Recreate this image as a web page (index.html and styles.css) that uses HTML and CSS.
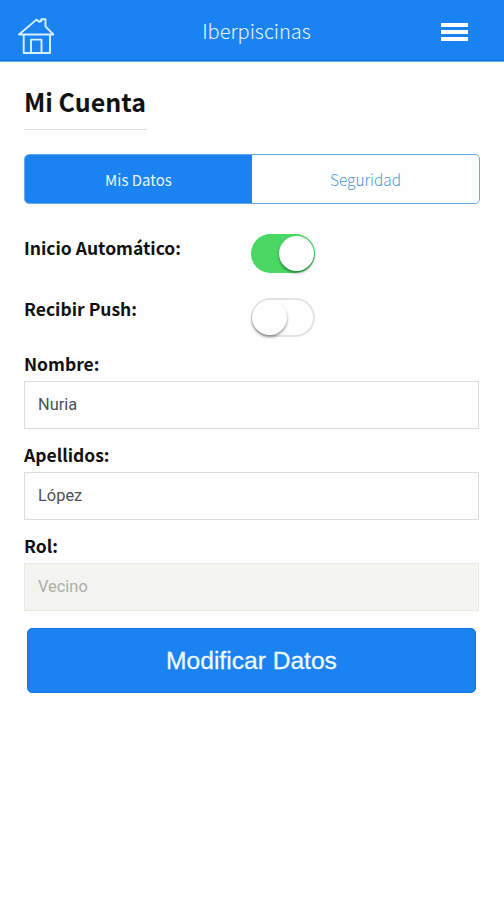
FILE: index.html
```html
<!DOCTYPE html>
<html lang="es">
<head>
<meta charset="utf-8">
<title>Mi Cuenta</title>
<link rel="stylesheet" href="styles.css">
</head>
<body>
<header class="bar">
  <svg class="home" viewBox="0 0 38 38" width="38" height="38">
    <path d="M2 17.5 19.5 2.6l2.6 2.3V4.2h2.2V2.2h4.2v7.2l7.8 8.1z"/>
    <path d="M6.7 18v18h26.3V18M14 36V22.6h10.5V36"/>
  </svg>
  <span class="brand">Iberpiscinas</span>
  <span class="menu"><i></i><i></i><i></i></span>
</header>
<main class="page">
  <h1 class="title"><span>Mi Cuenta</span></h1>
  <nav class="tabs">
    <a class="tab active"><span>Mis Datos</span></a>
    <a class="tab"><span>Seguridad</span></a>
  </nav>
  <div class="option first"><span class="label auto">Inicio Automático:</span><span class="switch on"></span></div>
  <div class="option"><span class="label push">Recibir Push:</span><span class="switch"></span></div>
  <form class="form">
    <label class="label">Nombre:</label>
    <div class="field">Nuria</div>
    <label class="label">Apellidos:</label>
    <div class="field">López</div>
    <label class="label">Rol:</label>
    <div class="field disabled">Vecino</div>
    <button type="button" class="submit">Modificar Datos</button>
  </form>
</main>
</body>
</html>
```
FILE: styles.css
```css
* { box-sizing: border-box; }
body {
  margin: 0;
  background: #fefefe;
  color: #111;
  font-family: "Noto Sans CJK SC", "Noto Sans", sans-serif;
}
.bar {
  height: 62px;
  padding: 0 36px 0 17px;
  display: grid;
  grid-template-columns: 38px 1fr 27px;
  background: #1b82f1;
  border-bottom: 1px solid #6aaef4;
  box-shadow: inset 0 -1px #0c70dc;
}
.home {
  margin-top: 17px;
  fill: none;
  stroke: #d5f1ff;
  stroke-width: 1.9;
  stroke-linejoin: round;
}
.brand {
  padding-left: 17px;
  text-align: center;
  font-size: 20px;
  font-weight: 300;
  line-height: 62px;
  color: #e8f7ff;
}
.menu {
  margin-top: 23px;
  display: flex;
  flex-direction: column;
  gap: 3px;
}
.menu i { height: 4px; background: #fff; }
.page { padding: 20px 24px 0; }
.title {
  width: 123px;
  height: 48px;
  margin: 0 0 24px;
  border-bottom: 1px solid #ddd;
  font-size: 25px;
  font-weight: 700;
  line-height: 38px;
  white-space: nowrap;
}
.tabs {
  width: 456px;
  height: 50px;
  display: flex;
  border: 1px solid #68a8e4;
  border-radius: 5px;
  overflow: hidden;
}
.tab {
  flex: 1;
  text-align: center;
  font-size: 15.4px;
  font-weight: 300;
  line-height: 49px;
  color: #4a98dc;
}
.tab.active { background: #1b82f1; color: #eaf6ff; font-size: 15px; font-weight: 400; }
.option {
  height: 39px;
  margin-top: 25px;
  display: grid;
  grid-template-columns: 227px 64px;
}
.option.first { margin-top: 30px; }
.label {
  display: block;
  font-size: 17.5px;
  font-weight: 700;
  line-height: 28px;
}
.push { margin-top: -3px; }
.switch {
  display: flex;
  height: 39px;
  padding: 2px 1px;
  border-radius: 20px;
  background: #fefefe;
  box-shadow: inset 0 0 0 2px #e3e3e3;
}
.switch::before {
  content: "";
  width: 35px;
  height: 35px;
  border-radius: 50%;
  background: #fefefe;
  box-shadow: 0 2px 3px rgba(0, 0, 0, .4);
}
.switch.on { justify-content: flex-end; background: #49d863; box-shadow: none; }
.form { padding-top: 13px; }
.form .label { height: 31px; }
.field {
  width: 455px;
  height: 48px;
  margin-bottom: 12px;
  padding-left: 13px;
  border: 1px solid #ddd;
  font: 16.4px/46px Roboto, sans-serif;
  color: #505050;
}
.field.disabled { background: #f3f4ef; border-color: #e8e9e4; color: #adada9; }
.submit {
  display: block;
  width: 449px;
  height: 65px;
  margin: 17px 0 0 3px;
  padding: 0;
  border: 1px solid #1276e4;
  border-radius: 5px;
  background: #1b82f1;
  color: #f0faff;
  font: 24.6px/63px "Liberation Sans", Arial, sans-serif;
  -webkit-text-stroke: .3px #f0faff;
}
```
